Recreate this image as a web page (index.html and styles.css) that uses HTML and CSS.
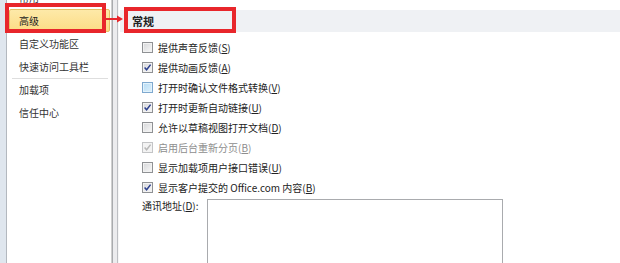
FILE: index.html
```html
<!DOCTYPE html>
<html lang="zh-CN">
<head>
<meta charset="utf-8">
<title>高级</title>
<link rel="stylesheet" href="styles.css">
</head>
<body>
<div class="window">
  <div class="edge"></div>
  <nav class="sidebar">
    <ul class="menu">
      <li class="item">常用</li>
      <li class="item selected">高级</li>
      <li class="item">自定义功能区</li>
      <li class="item">快速访问工具栏</li>
      <li class="item sep">加载项</li>
      <li class="item">信任中心</li>
    </ul>
  </nav>
  <div class="splitter"></div>
  <main class="content">
    <div class="section-head">常规</div>
    <div class="options">
      <div class="opt"><span class="cb"></span><span>提供声音反馈(<u>S</u>)</span></div>
      <div class="opt"><span class="cb"><svg viewBox="0 0 9 9"><polyline points="1.6,4.6 3.6,6.8 7.6,1.6"/></svg></span><span>提供动画反馈(<u>A</u>)</span></div>
      <div class="opt"><span class="cb hover"></span><span>打开时确认文件格式转换(<u>V</u>)</span></div>
      <div class="opt"><span class="cb"><svg viewBox="0 0 9 9"><polyline points="1.6,4.6 3.6,6.8 7.6,1.6"/></svg></span><span>打开时更新自动链接(<u>U</u>)</span></div>
      <div class="opt"><span class="cb"></span><span>允许以草稿视图打开文档(<u>D</u>)</span></div>
      <div class="opt disabled"><span class="cb"><svg viewBox="0 0 9 9"><polyline points="1.6,4.6 3.6,6.8 7.6,1.6"/></svg></span><span>启用后台重新分页(<u>B</u>)</span></div>
      <div class="opt"><span class="cb"></span><span>显示加载项用户接口错误(<u>U</u>)</span></div>
      <div class="opt"><span class="cb"><svg viewBox="0 0 9 9"><polyline points="1.6,4.6 3.6,6.8 7.6,1.6"/></svg></span><span>显示客户提交的 Office.com 内容(<u>B</u>)</span></div>
    </div>
    <div class="addr">
      <span class="addr-label">通讯地址(<u>D</u>):</span>
      <div class="textbox"></div>
    </div>
  </main>
  <div class="mark mark-nav"></div>
  <div class="mark mark-head"></div>
  <svg class="arrow" viewBox="0 0 18 10"><line x1="0" y1="5" x2="12" y2="5"/><polygon points="11,1.5 17,5 11,8.5"/></svg>
</div>
</body>
</html>
```

FILE: styles.css
```css
* { box-sizing: border-box; }
html, body { margin: 0; padding: 0; }
body {
  width: 620px;
  height: 263px;
  overflow: hidden;
  background: #fff;
  font-family: "Noto Sans CJK SC", "Noto Sans", sans-serif;
  font-size: 10px;
  color: #222;
}
.window {
  position: relative;
  display: flex;
  width: 620px;
  height: 263px;
  overflow: hidden;
}
.edge {
  width: 7px;
  flex: none;
  background: #dfe6ee;
  border-right: 1px solid #b3b8bf;
}
.sidebar {
  width: 104px;
  flex: none;
  background: #fff;
}
.menu {
  list-style: none;
  margin: -14px 0 0 0;
  padding: 0;
}
.item {
  position: relative;
  height: 23px;
  line-height: 21px;
  margin: 0 1px 0 2px;
  padding-left: 9px;
  border: 1px solid transparent;
  border-radius: 2px;
  color: #333;
  white-space: nowrap;
}
.item.selected {
  background: linear-gradient(#fde9a8, #fcdc85);
  border-color: #e6c066;
  color: #222;
}
.item.sep::before {
  content: "";
  position: absolute;
  left: 2px;
  right: 1px;
  top: -1px;
  border-top: 1px solid #dedede;
}
.splitter {
  width: 8px;
  flex: none;
  background: linear-gradient(to right, #cfcfcf 0 1px, #a9abae 1px 2px, #ececee 2px 6px, #bdbfc3 6px 7px, #f6f6f6 7px 8px);
}
.content {
  flex: 1;
  min-width: 0;
}
.section-head {
  margin: 10px 0 0 1px;
  height: 22px;
  line-height: 22px;
  padding-left: 12px;
  background: #eff1f4;
  font-size: 11px;
  font-weight: bold;
  color: #222;
}
.options {
  padding: 5px 0 0 23px;
}
.opt {
  display: flex;
  align-items: center;
  height: 20px;
  gap: 5px;
  white-space: nowrap;
}
.opt u { text-underline-offset: 1px; }
.cb {
  width: 11px;
  height: 11px;
  flex: none;
  border: 1px solid #8f9194;
  background: linear-gradient(135deg, #d6d7d9, #f8f8f8);
  box-shadow: inset 0 0 0 1px #f2f2f2;
  display: flex;
  align-items: center;
  justify-content: center;
}
.cb svg {
  width: 9px;
  height: 9px;
  fill: none;
  stroke: #2b3f8e;
  stroke-width: 1.5;
}
.cb.hover {
  border-color: #7fa9cf;
  background: linear-gradient(135deg, #b7dcf5, #dcf0fb);
  box-shadow: inset 0 0 0 1px #e3f3fc;
}
.opt.disabled { color: #8e8e8e; }
.opt.disabled .cb {
  border-color: #c3c4c6;
  background: #f3f3f3;
  box-shadow: none;
}
.opt.disabled .cb svg { stroke: #b8b8b8; }
.addr {
  display: flex;
  align-items: flex-start;
  margin-top: 2px;
  padding-left: 23px;
}
.addr-label {
  width: 65px;
  flex: none;
  line-height: 14px;
  white-space: nowrap;
}
.textbox {
  width: 296px;
  height: 90px;
  border: 1px solid #a9abae;
  background: #fff;
}
.mark {
  position: absolute;
  border: 4px solid #e8262b;
}
.mark-nav {
  left: 5px;
  top: 3px;
  width: 101px;
  height: 30px;
}
.mark-head {
  left: 124px;
  top: 7px;
  width: 112px;
  height: 26px;
}
.arrow {
  position: absolute;
  left: 106px;
  top: 14px;
  width: 18px;
  height: 10px;
}
.arrow line { stroke: #e8262b; stroke-width: 2; }
.arrow polygon { fill: #e8262b; }
```
